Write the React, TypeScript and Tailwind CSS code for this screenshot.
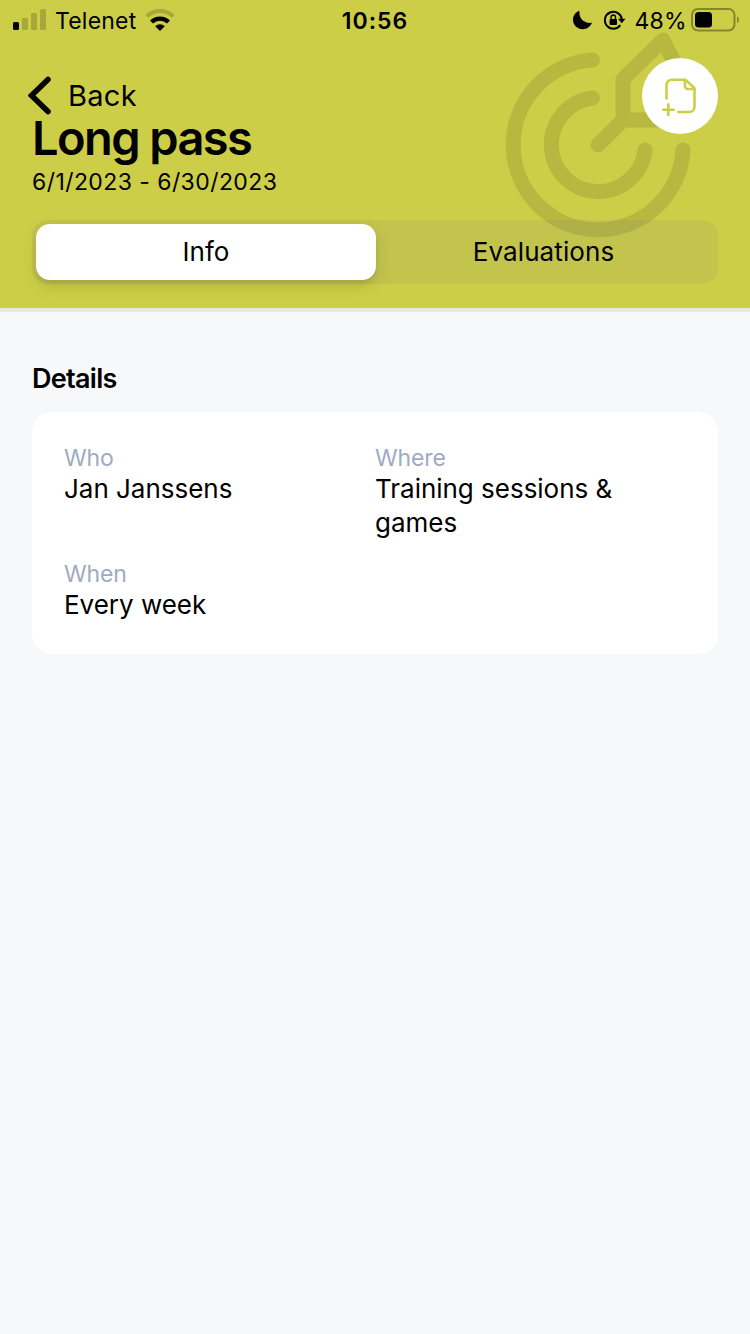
type DetailProps = {
  label: string;
  value: string;
};

function SignalIcon() {
  return (
    <svg aria-hidden="true" width="34" height="22" viewBox="0 0 34 22">
      <rect x="0" y="13" width="6" height="8" rx="1.5" fill="#000" />
      <g fill="#a7a73a">
        <rect x="9" y="9" width="6" height="12" rx="1.5" />
        <rect x="18" y="4" width="6" height="17" rx="1.5" />
        <rect x="27" y="0" width="6" height="21" rx="1.5" />
      </g>
    </svg>
  );
}

function WifiIcon() {
  return (
    <svg aria-hidden="true" width="30" height="22" viewBox="0 0 30 22" fill="none">
      <path d="M1.7 7.3a19.2 19.2 0 0 1 26.6 0" stroke="#a7a73a" strokeWidth="4" />
      <path d="M6.500 13a12.400 12.400 0 0 1 17 0" stroke="#000" strokeWidth="4.400" />
      <path d="M15 22l-4.800-4.700a6.800 6.800 0 0 1 9.600 0Z" fill="#000" />
    </svg>
  );
}

function MoonIcon() {
  return (
    <svg aria-hidden="true" width="20" height="20" viewBox="0 0 20 20">
      <path
        d="M6.500.8C5.400 7.500 10.500 14 19 12.800 17.200 17 13.800 19.200 9.800 19.200 4.200 19.200 0 15 0 9.800 0 5.600 2.500 2.200 6.500.8Z"
        fill="#000"
      />
    </svg>
  );
}

function RotationLockIcon() {
  return (
    <svg aria-hidden="true" width="22" height="20" viewBox="0 0 22 20" fill="none">
      <path d="M16.3 15.200A8.500 8.500 0 1 1 17.800 9" stroke="#000" strokeWidth="2" />
      <path d="M14 8.700h7.500l-3.700 4.600Z" fill="#000" />
      <rect x="5.600" y="8.900" width="7.400" height="6" rx="1" fill="#000" />
      <path d="M7.100 9.500V7.200a2.200 2.200 0 0 1 4.400 0v2.300" stroke="#000" strokeWidth="1.400" />
    </svg>
  );
}

function BatteryIcon() {
  return (
    <svg aria-hidden="true" width="49" height="24" viewBox="0 0 49 24" fill="none">
      <rect x="1" y="1" width="42.5" height="21.5" rx="6" stroke="#85862e" strokeWidth="2" />
      <rect x="4" y="4" width="17" height="15.5" rx="3.5" fill="#000" />
      <path d="M46 8.200c2.600 1.200 2.600 5.600 0 6.800Z" fill="#85862e" />
    </svg>
  );
}

function TargetIcon() {
  return (
    <svg
      aria-hidden="true"
      className="absolute top-[25px] left-[490px]"
      width="220"
      height="220"
      viewBox="490 25 220 220"
      fill="none"
      stroke="#000"
      strokeWidth="15"
      strokeLinecap="round"
      strokeLinejoin="round"
    >
      <g opacity="0.1">
        <path d="M592.5 60A85 85 0 1 0 683 150" />
        <path d="M592.5 98A47 47 0 1 0 645 150" />
        <path d="M598 145l25-25V79l40-39 15 30 20 10-38 40h-37" />
      </g>
    </svg>
  );
}

function AddNoteIcon() {
  return (
    <svg
      aria-hidden="true"
      width="36"
      height="40"
      viewBox="0 0 36 40"
      fill="none"
      stroke="#cdce47"
      strokeWidth="2.6"
      strokeLinecap="round"
      strokeLinejoin="round"
    >
      <path d="M4.500 22.500V9a5.300 5.300 0 0 1 5.300-5.300h13.700l9 8.500v18.500a5.300 5.300 0 0 1-5.300 5.300H16.300" />
      <path d="M22.900 4v6a3 3 0 0 0 3 3h6.300M6.300 28.200v11M1.300 33.700h10.500" />
    </svg>
  );
}

function StatusBar() {
  return (
    <div className="relative z-10 flex h-10 items-center justify-between pr-[10px] pl-[13px]">
      <div className="flex w-[300px] items-center">
        <SignalIcon />
        <span className="mt-0.5 ml-2 text-[23px] leading-7 tracking-[0.2px]">Telenet</span>
        <span className="ml-[9px]">
          <WifiIcon />
        </span>
      </div>
      <span className="mt-0.5 mr-[3px] text-[23px] leading-7 font-semibold tracking-[1px]">10:56</span>
      <div className="flex w-[300px] items-center justify-end">
        <MoonIcon />
        <span className="ml-[11px]">
          <RotationLockIcon />
        </span>
        <span className="mt-0.5 ml-2 text-[23px] leading-7 tracking-[0.3px]">48%</span>
        <span className="ml-1">
          <BatteryIcon />
        </span>
      </div>
    </div>
  );
}

function Detail({ label, value }: DetailProps) {
  return (
    <div>
      <dt className="text-[23px] leading-[28px] tracking-[-0.1px] text-[#a0aac3]">{label}</dt>
      <dd className="text-[26px] leading-[34px] tracking-[-0.02px]">{value}</dd>
    </div>
  );
}

export default function App() {
  return (
    <div className="min-h-screen bg-[#f7f8fa] font-[Inter,sans-serif] text-black">
      <header className="relative h-[308px] bg-[#cdce47] shadow-[0_2px_0_#e7e7e6,0_4px_0_#ebebe3,0_6px_2px_rgba(0,0,0,0.01)]">
        <TargetIcon />
        <StatusBar />

        <div className="relative flex items-start justify-between pt-[18px] pr-8 pl-7">
          <div>
            <button type="button" className="flex h-[53px] items-center pt-[23px]">
              <svg aria-hidden="true" width="24" height="40" viewBox="0 0 24 40" fill="none">
                <path
                  d="M20 3.5L3.500 19.500l16.500 16"
                  stroke="#000"
                  strokeWidth="5.5"
                  strokeLinecap="round"
                />
              </svg>
              <span className="ml-4 text-[29px] leading-7 tracking-[0.3px]">Back</span>
            </button>
            <h1 className="ml-1 pt-0.5 text-[47px] leading-[50px] font-semibold tracking-[-1.6px]">
              Long pass
            </h1>
            <p className="mt-[5px] ml-1 text-[23px] leading-[28px] tracking-[0.43px]">
              6/1/2023 - 6/30/2023
            </p>
          </div>
          <button
            type="button"
            aria-label="Add note"
            className="flex size-[76px] items-center justify-center rounded-full bg-white"
          >
            <AddNoteIcon />
          </button>
        </div>

        <div className="relative mx-8 mt-6 flex h-16 rounded-2xl bg-[rgba(120,120,128,0.12)] p-1 text-[26px]">
          <button
            type="button"
            className="w-[340px] rounded-[14px] bg-white pb-0.5 shadow-[0_6px_16px_rgba(0,0,0,0.12),0_4px_4px_rgba(0,0,0,0.06)]"
          >
            Info
          </button>
          <button type="button" className="flex-1 pr-[3px] pb-0.5 tracking-[0.1px]">
            Evaluations
          </button>
        </div>
      </header>

      <main className="px-8 pt-[54px]">
        <h2 className="text-[27px] leading-[34px] font-semibold tracking-[-0.7px]">Details</h2>
        <dl className="mt-4 grid h-[242px] grid-cols-2 content-start gap-y-5 rounded-[20px] bg-white px-8 pt-8">
          <Detail label="Who" value="Jan Janssens" />
          <Detail label="Where" value="Training sessions & games" />
          <Detail label="When" value="Every week" />
        </dl>
      </main>
    </div>
  );
}
